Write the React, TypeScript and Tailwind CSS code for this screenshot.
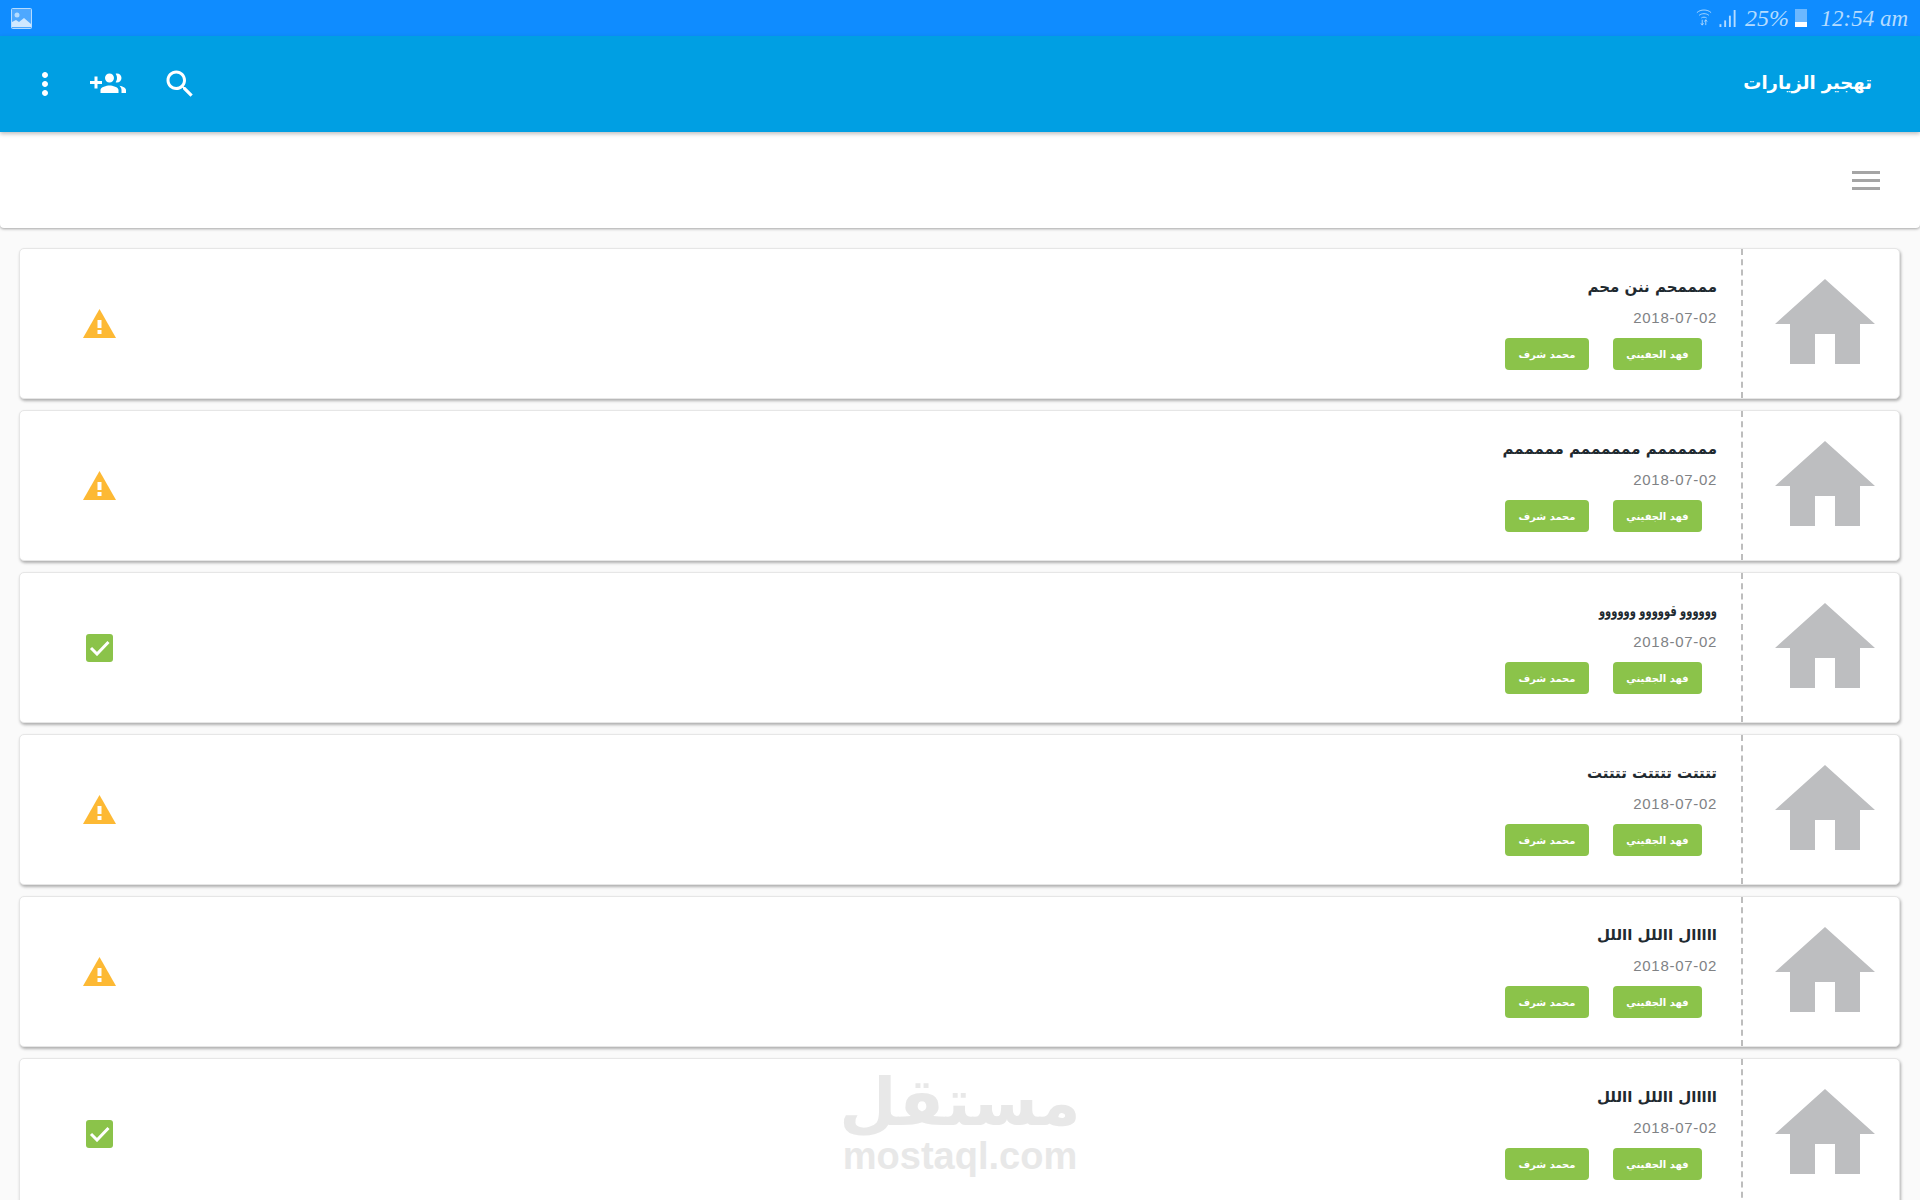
const visits = [
  { title: 'ممممحم ننن محم', status: 'warn', titleClass: '' },
  { title: 'ممممممم ممممممم مممممم', status: 'warn', titleClass: '' },
  { title: 'وووووو قووووو وووووو', status: 'ok', titleClass: 'origin-right scale-x-[0.66]' },
  { title: 'تتتتت تتتتت تتتتت', status: 'warn', titleClass: '' },
  { title: 'ااااال االلل االلل', status: 'warn', titleClass: '' },
  { title: 'ااااال االلل االلل', status: 'ok', titleClass: '' },
];

function StatusBar() {
  return (
    <div className="h-[36px] bg-[#0f8cff] flex items-center justify-between pl-[11px] pr-[12px] text-[#b5dcff]">
      <svg width="21" height="21" viewBox="0 0 21 21">
        <rect x="0.5" y="0.5" width="20" height="20" rx="1" fill="#4ea8ff" stroke="#b5dcff" />
        <circle cx="6" cy="7" r="2.5" fill="#b5dcff" />
        <path d="M1 19v-5l4-2 3 2 5-4 7 6v3z" fill="#cfe8ff" />
      </svg>
      <div className="flex items-center font-['Liberation_Serif',serif] italic">
        <svg width="16" height="20" viewBox="0 0 18 20" className="mr-[7px]" fill="none" stroke="#b5dcff" strokeWidth="1">
          <path d="M1 4c4-4 12-4 16 0M3.500 7c3-2.500 8-2.500 11 0M6 10c1.500-1.200 4.500-1.200 6 0" />
          <path d="M7 12v6M5.500 16l1.500 2 1.500-2M11 18v-6M9.500 14l1.500-2 1.500 2" />
        </svg>
        <svg width="18" height="17" viewBox="0 0 18 18" className="mr-[8px]" fill="#b5dcff">
          <rect x="0" y="15" width="2" height="3" />
          <rect x="5" y="11" width="2" height="7" />
          <rect x="10" y="6" width="2" height="12" />
          <rect x="15" y="0" width="2" height="18" />
        </svg>
        <span className="text-[24px] leading-none w-[45px] mr-[5px] whitespace-nowrap">25%</span>
        <div className="w-[12px] h-[18px] mr-[8px] bg-[#6cb8ff] relative">
          <div className="absolute bottom-0 inset-x-0 h-[5px] bg-white" />
        </div>
        <span className="text-[23px] leading-none w-[93px] text-right whitespace-nowrap">12:54 am</span>
      </div>
    </div>
  );
}

function AppBar() {
  return (
    <div className="relative z-10 h-[96px] bg-[#009fe3] shadow-[0_2px_4px_rgba(0,0,0,0.25)] flex items-center justify-between pl-[27px] pr-[48px]">
      <div className="flex items-center">
        <svg width="36" height="36" viewBox="0 0 24 24" fill="#fff">
          <path d="M12 8c1.100 0 2-.9 2-2s-.9-2-2-2-2 .9-2 2 .9 2 2 2zm0 2c-1.100 0-2 .9-2 2s.9 2 2 2 2-.9 2-2-.9-2-2-2zm0 6c-1.100 0-2 .9-2 2s.9 2 2 2 2-.9 2-2-.9-2-2-2z" />
        </svg>
        <svg width="36" height="36" viewBox="0 0 24 24" fill="#fff" className="ml-[27px]">
          <path d="M8 10H5V7H3v3H0v2h3v3h2v-3h3v-2zm10 1c1.660 0 2.990-1.340 2.990-3S19.660 5 18 5c-.32 0-.63.05-.91.14.57.81.9 1.790.9 2.860s-.34 2.040-.9 2.860c.28.09.59.14.91.14zm-5 0c1.660 0 2.990-1.340 2.990-3S14.660 5 13 5s-3 1.340-3 3 1.340 3 3 3zm6.620 2.160c.83.73 1.380 1.660 1.380 2.840v2h3v-2c0-1.540-2.370-2.490-4.380-2.840zM13 13c-2 0-6 1-6 3v2h12v-2c0-2-4-3-6-3z" />
        </svg>
        <svg width="36" height="36" viewBox="0 0 24 24" fill="#fff" className="ml-[36px]">
          <path d="M15.500 14h-.79l-.28-.27C15.410 12.590 16 11.110 16 9.500 16 5.910 13.090 3 9.500 3S3 5.910 3 9.500 5.910 16 9.500 16c1.610 0 3.090-.59 4.230-1.570l.27.28v.79l5 4.990L20.490 19l-4.990-5zm-6 0C7.010 14 5 11.990 5 9.500S7.010 5 9.500 5 14 7.010 14 9.500 11.990 14 9.500 14z" />
        </svg>
      </div>
      <div dir="rtl" className="font-['DejaVu_Sans',sans-serif] font-bold text-[18px] leading-[24px] mb-[3px] text-white">تهجير الزيارات</div>
    </div>
  );
}

function WarnIcon() {
  return (
    <svg width="33" height="30" viewBox="0 0 33 30">
      <path d="M16.500 0L33 29H0z" fill="#fdb934" />
      <rect x="14.500" y="11" width="4" height="8" fill="#fff" />
      <rect x="14.500" y="21" width="4" height="4" fill="#fff" />
    </svg>
  );
}

function OkIcon() {
  return (
    <div className="w-[27px] h-[28px] rounded-[3px] bg-[#8bc34a] flex items-center justify-center">
      <svg width="21" height="16" viewBox="0 0 21 16" fill="none" stroke="#fff" strokeWidth="3">
        <path d="M2 8l6 6L19.500 2" />
      </svg>
    </div>
  );
}

function HouseIcon() {
  return (
    <svg width="100" height="85" viewBox="0 0 100 85" fill="#bdbec0">
      <path d="M50 0l50 45H85v40H60V55H40v30H15V45H0z" />
    </svg>
  );
}

function VisitCard({ title, status, titleClass }: { title: string; status: string; titleClass: string }) {
  return (
    <div className="h-[151px] flex bg-white rounded-[5px] border border-[#e6e6e6] shadow-[1px_2px_3px_rgba(0,0,0,0.3)]">
      <div className="w-[158px] flex items-center justify-center">
        {status === 'warn' ? <WarnIcon /> : <OkIcon />}
      </div>
      <div dir="rtl" className="flex-1 pt-[26px] pr-[24px]">
        <div className={`font-['DejaVu_Sans',sans-serif] font-bold text-[15px] leading-[24px] text-[#1f2a30] ${titleClass}`}>{title}</div>
        <div dir="ltr" className="text-right font-['Liberation_Sans',sans-serif] text-[15px] leading-[20px] mt-[9px] tracking-[0.7px] text-[#808285]">2018-07-02</div>
        <div className="flex gap-[24px] mt-[10px] mr-[15px] font-['DejaVu_Sans',sans-serif] font-bold text-[10px] text-white">
          <div className="w-[89px] h-[32px] rounded-[4px] bg-[#8bc34a] flex items-center justify-center">فهد الجفيني</div>
          <div className="w-[84px] h-[32px] rounded-[4px] bg-[#8bc34a] flex items-center justify-center">محمد شرف</div>
        </div>
      </div>
      <div className="w-[158px] shrink-0 border-l-2 border-dashed border-[#bdbdbd] flex items-center justify-center pl-[8px] pb-[5px]">
        <HouseIcon />
      </div>
    </div>
  );
}

export default function App() {
  return (
    <div className="relative w-[1920px] h-[1200px] overflow-hidden bg-[#fafafa]">
      <StatusBar />
      <AppBar />
      <div className="h-[96px] bg-white rounded-b-[4px] shadow-[0_1px_3px_rgba(0,0,0,0.35)] flex items-center justify-end pr-[40px]">
        <div className="w-[28px] flex flex-col gap-[5px]">
          <div className="h-[3px] bg-[#a5a5a5]" />
          <div className="h-[3px] bg-[#a5a5a5]" />
          <div className="h-[3px] bg-[#a5a5a5]" />
        </div>
      </div>
      <div className="flex flex-col gap-[11px] pt-[20px] pl-[19px] pr-[20px]">
        {visits.map((v, i) => (
          <VisitCard key={i} title={v.title} status={v.status} titleClass={v.titleClass} />
        ))}
      </div>
      {/* watermark */}
      <div className="absolute left-[845px] top-[1070px] w-[230px] flex flex-col items-center text-[#e8e8e8] pointer-events-none">
        <div dir="rtl" className="font-['DejaVu_Sans',sans-serif] font-bold text-[66px] leading-[66px] whitespace-nowrap">مستقل</div>
        <div className="font-['Liberation_Sans',sans-serif] font-bold text-[38px] leading-[40px]">mostaql.com</div>
      </div>
    </div>
  );
}
